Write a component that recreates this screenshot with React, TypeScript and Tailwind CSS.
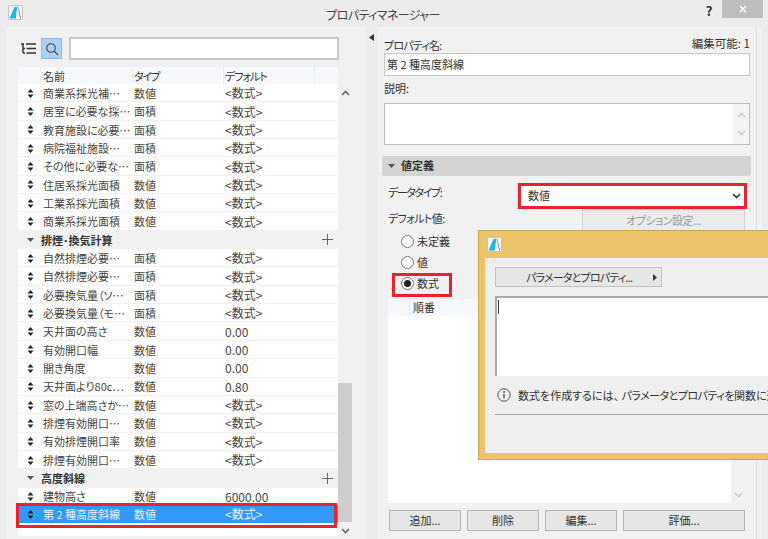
const font = '[font-family:"Noto_Sans_CJK_JP","Liberation_Sans",sans-serif] [font-feature-settings:"palt"]'

type Row = { name: string; type: string; value: string }
type Item = Row | { group: string }

const items: Item[] = [
  { name: '商業系採光補…', type: '数値', value: '<数式>' },
  { name: '居室に必要な採…', type: '面積', value: '<数式>' },
  { name: '教育施設に必要…', type: '面積', value: '<数式>' },
  { name: '病院福祉施設…', type: '面積', value: '<数式>' },
  { name: 'その他に必要な…', type: '面積', value: '<数式>' },
  { name: '住居系採光面積', type: '数値', value: '<数式>' },
  { name: '工業系採光面積', type: '数値', value: '<数式>' },
  { name: '商業系採光面積', type: '数値', value: '<数式>' },
  { group: '排煙･換気計算' },
  { name: '自然排煙必要…', type: '面積', value: '<数式>' },
  { name: '自然排煙必要…', type: '面積', value: '<数式>' },
  { name: '必要換気量（ソ…', type: '面積', value: '<数式>' },
  { name: '必要換気量（モ…', type: '面積', value: '<数式>' },
  { name: '天井面の高さ', type: '数値', value: '0.00' },
  { name: '有効開口幅', type: '数値', value: '0.00' },
  { name: '開き角度', type: '数値', value: '0.00' },
  { name: '天井面より80c…', type: '数値', value: '0.80' },
  { name: '窓の上端高さか…', type: '数値', value: '<数式>' },
  { name: '排煙有効開口…', type: '数値', value: '<数式>' },
  { name: '有効排煙開口率', type: '数値', value: '<数式>' },
  { name: '排煙有効開口…', type: '数値', value: '<数式>' },
  { group: '高度斜線' },
  { name: '建物高さ', type: '数値', value: '6000.00' },
]

function Logo() {
  return (
    <svg width="15" height="15" viewBox="0 0 15 15" className="shrink-0">
      <rect x="0.5" y="0.5" width="14" height="14" rx="1" fill="#f4f4f4" stroke="#c4c4c4" />
      <path d="M1.5 13.5 C3.5 9 5 5 6.5 2 H9.5 C8.5 6 8 10 8 13.5 Z" fill="#1fb6ea" />
      <path d="M10.2 2 L13 13.5 H12.2 L9.8 2 Z" fill="#5a6a78" />
    </svg>
  )
}

function SortHandle({ color = '#222' }: { color?: string }) {
  return (
    <svg width="7" height="9" viewBox="0 0 7 9">
      <path d="M3.5 0 L6.5 3.5 H0.5 Z M3.5 9 L0.5 5.5 H6.5 Z" fill={color} />
    </svg>
  )
}

function Chevron({ up = false, color = '#777' }: { up?: boolean; color?: string }) {
  return (
    <svg width="9" height="6" viewBox="0 0 9 6">
      <path d={up ? 'M1 5 L4.5 1.5 L8 5' : 'M1 1 L4.5 4.5 L8 1'} fill="none" stroke={color} strokeWidth="1.6" />
    </svg>
  )
}

function GroupArrow() {
  return (
    <svg width="7" height="4" viewBox="0 0 7 4">
      <path d="M0 0 H7 L3.5 4 Z" fill="#555" />
    </svg>
  )
}

function Plus() {
  return (
    <svg width="11" height="11" viewBox="0 0 11 11">
      <path d="M5.5 0 V11 M0 5.5 H11" stroke="#666" strokeWidth="1" />
    </svg>
  )
}

function Radio({ checked = false, label }: { checked?: boolean; label: string }) {
  return (
    <div className="flex items-center gap-[3px] h-[21px]">
      <span className="w-[13px] h-[13px] rounded-full border border-[#777] bg-white flex items-center justify-center">
        {checked && <span className="w-[7px] h-[7px] rounded-full bg-[#222]" />}
      </span>
      <span>{label}</span>
    </div>
  )
}

function Btn({ label, className }: { label: string; className: string }) {
  return (
    <div className={`h-[21px] bg-[#e6e6e6] border border-[#b4b4b4] flex items-center justify-center text-[#333] ${className}`}>
      {label}
    </div>
  )
}

function PropertyList() {
  return (
    <div className="relative w-[320px]">
      <div className="flex h-[17px] bg-[#f6f8fb] text-[#333] leading-[18px]">
        <div className="w-[23px] border-r border-[#e8eef6]" />
        <div className="w-[92px] pl-[2px] border-r border-[#e8eef6]">名前</div>
        <div className="w-[91px] pl-[1px] border-r border-[#e8eef6] tracking-[-1.5px]">タイプ</div>
        <div className="w-[91px] pl-[1px] border-r border-[#e8eef6] tracking-[-1px]">デフォルト</div>
      </div>
      {items.map((item, i) =>
        'group' in item ? (
          <div key={i} className="flex items-center h-[18.35px] bg-[#f1f1f1] font-bold text-[#333]">
            <div className="w-[23px] pl-[9px] flex items-center"><GroupArrow /></div>
            <div className="flex-1">{item.group}</div>
            <div className="w-[22px] flex justify-center"><Plus /></div>
          </div>
        ) : (
          <div key={i} className="flex items-center h-[18.35px] pt-px bg-white border-b border-[#f0f0f0] text-[#444]">
            <div className="w-[23px] pl-[9px] flex items-center"><SortHandle /></div>
            <div className="w-[92px] pl-[2px] whitespace-nowrap">{item.name}</div>
            <div className="w-[91px] pl-[1px]">{item.type}</div>
            <div className="pl-[1px] text-[12px]">{item.value}</div>
          </div>
        ),
      )}
      <div className="flex items-center h-[18px] -mt-px pt-px bg-[#3399ff] text-[#e8f3ff]">
        <div className="w-[23px] pl-[9px] flex items-center"><SortHandle /></div>
        <div className="w-[92px] pl-[2px] whitespace-nowrap">第 2 種高度斜線</div>
        <div className="w-[91px] pl-[1px]">数値</div>
        <div className="pl-[1px] text-[12px]">&lt;数式&gt;</div>
      </div>
      <div className="h-[13px] bg-white" />
      {/* annotation */}
      <div className="absolute left-[-2px] top-[436px] w-[321px] h-[25px] border-[3px] border-[#e8222e]" />
    </div>
  )
}

export default function App() {
  return (
    <div className={`${font} relative w-[768px] h-[539px] overflow-hidden bg-[#ececec] text-[11px] text-[#333] flex flex-col`}>
      {/* title bar */}
      <div className="h-[27px] shrink-0 flex items-start pl-[8px] relative">
        <div className="pt-[5px]"><Logo /></div>
        <div className="flex-1 text-center pt-[6px] text-[12px] tracking-[-0.6px] text-[#444] pl-[44px]">プロパティマネージャー</div>
        <div className="w-[20px] text-center font-bold text-[13px] mt-[1px] text-[#333]">?</div>
        <div className="w-[41px] h-[18px] ml-[3px] mr-[5px] bg-[#bdbdbd] flex items-center justify-center">
          <svg width="8" height="8" viewBox="0 0 8 8">
            <path d="M1 1 L7 7 M7 1 L1 7" stroke="#fff" strokeWidth="1.5" />
          </svg>
        </div>
      </div>

      <div className="flex-1 flex pl-[6px] min-h-0">
        {/* left panel */}
        <div className="w-[359px] bg-[#f1f1f1] pl-[12px]">
          <div className="flex items-center h-[40px] pt-[3px]">
            <svg width="15" height="12" viewBox="0 0 15 12" className="ml-[3px] mr-[5px]">
              <path d="M0 1 H3 M5 1 H15 M2 1 V10 M2 5.5 H4 M2 10 H4 M5.5 5.5 H15 M5.5 10 H15" stroke="#333" strokeWidth="1.4" fill="none" />
            </svg>
            <div className="w-[21px] h-[21px] bg-[#a9d2f5] border border-[#8cbce6] flex items-center justify-center">
              <svg width="14" height="14" viewBox="0 0 14 14">
                <circle cx="6" cy="6" r="4.3" fill="none" stroke="#444" strokeWidth="1.1" />
                <path d="M9.2 9.2 L13 13" stroke="#444" strokeWidth="1.2" />
              </svg>
            </div>
            <div className="w-[270px] h-[23px] ml-[7px] bg-white border-2 border-[#c9c9c9]" />
          </div>
          <div className="flex">
            <PropertyList />
            {/* list scrollbar */}
            <div className="w-[14px] flex flex-col pt-[23px] relative h-[469px]">
              <div className="flex justify-center"><Chevron up color="#666" /></div>
              <div className="flex-1" />
              <div className="w-[14px] h-[139px] bg-[#cdcdcd]" />
              <div className="flex justify-center pt-[6px] pb-[2px]"><Chevron color="#666" /></div>
            </div>
          </div>
        </div>

        {/* splitter */}
        <div className="w-[13px] flex justify-center pt-[7px]">
          <svg width="5" height="7" viewBox="0 0 5 7">
            <path d="M0 3.5 L5 0 V7 Z" fill="#333" />
          </svg>
        </div>

        {/* right panel */}
        <div className="w-[384px] bg-[#f1f1f1] pl-[6px] pr-[12px] relative">
          <div className="flex justify-between items-end h-[26px]">
            <span className="tracking-[-0.8px]">プロパティ名:</span>
            <span className="mb-[1px] text-[11.5px]">編集可能: 1</span>
          </div>
          <div className="h-[23px] bg-white border border-[#c6c6c6] pl-[2px] leading-[21px]">第 2 種高度斜線</div>
          <div className="h-[27px] pt-[4px]">説明:</div>
          <div className="h-[42px] bg-white border border-[#bdbdbd] flex justify-end">
            <div className="w-[16px] bg-[#f4f4f4] flex flex-col items-center justify-between py-[8px]">
              <Chevron up color="#ccc" />
              <Chevron color="#ccc" />
            </div>
          </div>
          <div className="h-[20px] mt-[11px] -ml-[2px] w-[369px] bg-[#d4d4d4] rounded-[2px] flex items-center font-bold pl-[6px] gap-[6px]">
            <GroupArrow />
            <span className="-mt-[2px]">値定義</span>
          </div>
          <div className="flex items-start h-[33px] mt-[1px]">
            <span className="w-[134px] pl-[4px] mt-[7px] tracking-[-1.4px]">データタイプ:</span>
            <div className="w-[229px] h-[26px] mt-[6px] border-[3px] border-[#e8222e] bg-white flex items-center justify-between pl-[7px] pr-[3px]">
              <span className="-mt-[2px]">数値</span>
              <Chevron color="#333" />
            </div>
          </div>
          <div className="flex h-[22px]">
            <span className="w-[198px] pl-[4px] tracking-[-0.6px]">デフォルト値:</span>
            <div className="w-[163px] -mt-[1px] h-[24px] border border-[#d2d2d2] bg-[#ebebeb] text-center text-[#999] leading-[20px] tracking-[-0.5px]">オプション設定...</div>
          </div>
          <div className="pl-[17px] h-[68px] -mt-px">
            <Radio label="未定義" />
            <Radio label="値" />
            <div className="relative w-fit">
              <Radio checked label="数式" />
              <div className="absolute left-[-9px] top-[0px] w-[60px] h-[24px] border-[3px] border-[#e8222e]" />
            </div>
          </div>
          {/* order list */}
          <div className="w-[343px] h-[204px] ml-[4px] bg-white">
            <div className="flex h-[17px] bg-[#f6f8fb] leading-[17px] text-[#333]">
              <div className="w-[22px] border-r border-[#e8eef6]" />
              <div className="pl-[3px]">順番</div>
            </div>
          </div>
          <div className="absolute left-[356px] top-[465px]"><Chevron color="#ccc" /></div>
          <div className="flex gap-[6px] ml-[5px] mt-[7px]">
            <Btn label="追加..." className="w-[72px]" />
            <Btn label="削除" className="w-[72px]" />
            <Btn label="編集..." className="w-[72px]" />
            <Btn label="評価..." className="w-[122px]" />
          </div>
          <div className="absolute right-[5px] top-0 bottom-0 w-px bg-[#dcdcdc]" />
        </div>
      </div>

      {/* formula dialog */}
      <div className="absolute left-[478px] top-[230px] w-[300px] h-[230px] overflow-hidden bg-[#eec46a] border border-[#c9a55c] flex flex-col pl-[6px]">
        <div className="h-[27px] shrink-0 pl-[2px] pt-[6px]"><Logo /></div>
        <div className="h-[195px] bg-[#efefef] pl-[10px] pt-[9px]">
          <div className="w-[167px] h-[20px] bg-[#e6e6e6] border border-[#c2c2c2] flex items-center justify-between pl-[30px] pr-[4px] whitespace-nowrap">
            <span className="tracking-[-0.8px]">パラメータとプロパティ...</span>
            <svg width="4" height="7" viewBox="0 0 4 7"><path d="M0 0 L4 3.5 L0 7 Z" fill="#333" /></svg>
          </div>
          <div className="mt-[9px] h-[80px] bg-white border-t-2 border-l-2 border-[#a9a9a9] pl-[1px] pt-[2px]">
            <div className="w-px h-[14px] bg-[#333]" />
          </div>
          <div className="flex items-center gap-[7px] h-[38px] whitespace-nowrap pl-[2px]">
            <svg width="14" height="14" viewBox="0 0 14 14" className="shrink-0">
              <circle cx="7" cy="7" r="6.2" fill="none" stroke="#555" />
              <path d="M7 6 V10.5" stroke="#444" strokeWidth="1.3" />
              <circle cx="7" cy="3.9" r="0.9" fill="#444" />
            </svg>
            <span className="whitespace-pre">数式を作成するには、 <span className="tracking-[-0.5px]">パラメータとプロパティを</span>関数に追加してください。</span>
          </div>
          <div className="h-px bg-[#aaa]" />
        </div>
      </div>
    </div>
  )
}
